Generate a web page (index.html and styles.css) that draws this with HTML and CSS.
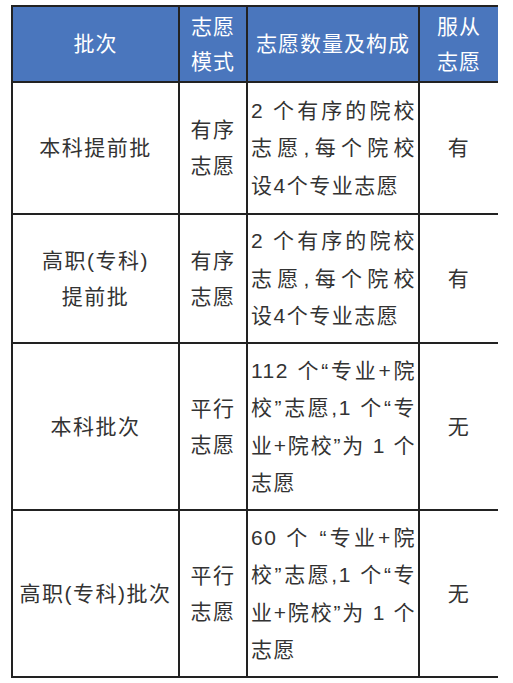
FILE: index.html
```html
<!DOCTYPE html>
<html lang="zh-CN">
<head>
<meta charset="utf-8">
<link rel="stylesheet" href="styles.css">
</head>
<body>
<table class="plan">
  <colgroup>
    <col class="c1"><col class="c2"><col class="c3"><col class="c4">
  </colgroup>
  <thead>
    <tr class="head">
      <th>批次</th>
      <th class="tight">志愿<br>模式</th>
      <th>志愿数量及构成</th>
      <th class="tight">服从<br>志愿</th>
    </tr>
  </thead>
  <tbody>
    <tr class="r1">
      <td>本科提前批</td>
      <td class="mode">有序<br>志愿</td>
      <td class="desc">
        <div class="jl">2 个有序的院校</div>
        <div class="jl">志愿,每个院校</div>
        <div class="ll">设4个专业志愿</div>
      </td>
      <td>有</td>
    </tr>
    <tr class="r2">
      <td class="mode">高职(专科)<br>提前批</td>
      <td class="mode">有序<br>志愿</td>
      <td class="desc">
        <div class="jl">2 个有序的院校</div>
        <div class="jl">志愿,每个院校</div>
        <div class="ll">设4个专业志愿</div>
      </td>
      <td>有</td>
    </tr>
    <tr class="r3">
      <td>本科批次</td>
      <td class="mode">平行<br>志愿</td>
      <td class="desc">
        <div class="jl">112 个“专业+院</div>
        <div class="jl">校”志愿,1 个“专</div>
        <div class="jl">业+院校”为 1 个</div>
        <div class="ll">志愿</div>
      </td>
      <td>无</td>
    </tr>
    <tr class="r4">
      <td>高职(专科)批次</td>
      <td class="mode">平行<br>志愿</td>
      <td class="desc">
        <div class="jl">60 个 “专业+院</div>
        <div class="jl">校”志愿,1 个“专</div>
        <div class="jl">业+院校”为 1 个</div>
        <div class="ll">志愿</div>
      </td>
      <td>无</td>
    </tr>
  </tbody>
</table>
</body>
</html>
```

FILE: styles.css
```css
html, body {
  margin: 0;
  padding: 0;
  background: #ffffff;
}

body {
  padding: 5px 0 0 11px;
  font-family: "Liberation Sans", "Noto Sans CJK SC", sans-serif;
}

.plan {
  border-collapse: collapse;
  table-layout: fixed;
  width: 486px;
  font-size: 21px;
  letter-spacing: 1.5px;
  color: #333333;
}

.c1 { width: 167px; }
.c2 { width: 68px; }
.c3 { width: 172px; }
.c4 { width: 79px; }

.plan th,
.plan td {
  border: 2px solid #222222;
  text-align: center;
  vertical-align: middle;
  padding: 0 3px;
  line-height: 36px;
}

.plan th:last-child,
.plan td:last-child {
  border-right: none;
}

.head th {
  background: #4a76bd;
  color: #ffffff;
  font-weight: normal;
  height: 74px;
  letter-spacing: 1px;
}

.head th.tight {
  line-height: 35px;
}

.r1 td { height: 130px; }
.r2 td { height: 127px; }
.r3 td { height: 165px; }
.r4 td { height: 165px; }

.plan td.desc {
  text-align: left;
  padding: 0 2px 0 3px;
  line-height: 37.5px;
}

.jl {
  text-align: justify;
  text-align-last: justify;
}

.ll {
  text-align: left;
}

.mode {
  line-height: 36px;
}
```
